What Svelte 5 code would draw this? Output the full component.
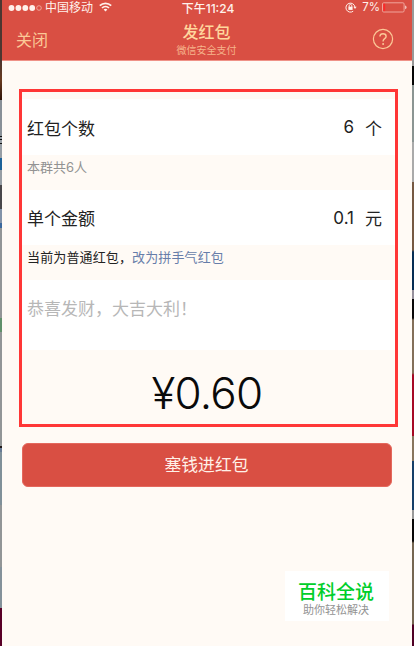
<script>
  const count = 6;
  const amount = '0.1';
  const total = '0.60';
</script>

<div class="desktop">
  <div class="edge left"></div>
  <main class="phone">
    <header>
      <div class="status">
        <div class="carrier">
          <svg width="35" height="8" viewBox="0 0 35 8">
            <g fill="#fff1eb">
              <circle cx="3.5" cy="4" r="2.9" /><circle cx="10.4" cy="4" r="2.9" />
              <circle cx="17.3" cy="4" r="2.9" /><circle cx="24.2" cy="4" r="2.9" />
            </g>
            <circle cx="31" cy="4" r="2.3" fill="none" stroke="#f3aaa0" stroke-width="0.9" />
          </svg>
          <span>中国移动</span>
          <svg class="wifi" width="13" height="10" viewBox="0 0 13 10" fill="none" stroke="#fff1eb" stroke-width="1.7">
            <path d="M.8 3.6a8.2 8.2 0 0 1 11.4 0M3 6a5 5 0 0 1 7 0" />
            <path d="M4.6 7.6a2.8 2.8 0 0 1 3.8 0L6.5 9.6z" fill="#fff1eb" stroke="none" />
          </svg>
        </div>
        <span class="time">下午11:24</span>
        <div class="power">
          <svg width="12" height="11" viewBox="0 0 12 11" fill="none" stroke="#fff1eb">
            <path d="M8.2 9.2A4.5 4.5 0 1 1 9.9 5" stroke-width="1" />
            <path d="M8.4 4.7h3.2L10 7z" fill="#fff1eb" stroke="none" />
            <path d="M4.2 5V3.8a1.3 1.3 0 0 1 2.6 0V5" stroke-width=".9" />
            <rect x="3.4" y="4.7" width="4.2" height="3.2" fill="#fff1eb" stroke="none" />
          </svg>
          <span>7%</span>
          <svg width="25" height="11" viewBox="0 0 25 11">
            <rect x=".5" y=".8" width="21.6" height="9.2" rx="1.2" fill="none" stroke="#f0a49b" />
            <rect x="1.4" y="1.7" width="1.7" height="7.4" fill="#ff2929" />
            <path d="M23.3 3.6c1.5.3 1.5 3.3 0 3.6z" fill="#fff1eb" />
          </svg>
        </div>
      </div>
      <nav>
        <span class="close">关闭</span>
        <div class="title"><h1>发红包</h1><p>微信安全支付</p></div>
        <svg class="help" width="22" height="22" viewBox="0 0 22 22" fill="none" stroke="#fbc897">
          <circle cx="11" cy="11" r="9.6" stroke-width="1.2" />
          <path d="M7.9 8.5C8 6.8 9.2 5.8 11 5.8s3.1 1 3.1 2.6c0 2.2-3 2.3-3 4.7v.5" stroke-width="1.4" />
          <circle cx="11.1" cy="15.9" r="1" fill="#fbc897" stroke="none" />
        </svg>
      </nav>
    </header>

    <section class="frame">
      <div class="row"><span>红包个数</span><span class="value">{count}</span><span class="unit">个</span></div>
      <p class="note members">本群共6人</p>
      <div class="row second"><span>单个金额</span><span class="value">{amount}</span><span class="unit">元</span></div>
      <p class="note mode">当前为普通红包，<span class="link">改为拼手气红包</span></p>
      <div class="message">恭喜发财，大吉大利！</div>
      <div class="total"><span class="yen">¥</span><span>{total}</span></div>
    </section>

    <button>塞钱进红包</button>
    <aside><strong>百科全说</strong><span>助你轻松解决</span></aside>
  </main>
  <div class="edge right"></div>
</div>

<style>
  .desktop {
    display: flex;
    width: 414px;
    height: 646px;
    overflow: hidden;
    font-family: Inter, "Noto Sans CJK SC", sans-serif;
    color: #222;
  }
  .edge { width: 2px; flex: none; }
  .left {
    background: linear-gradient(#4b3630 0 60px, #693a20 80px, #30150a 100px, #899097 100px 136px,
      #111 136px 137px, #969da4 137px 139px, #111 139px 140px, #969da4 140px 143px, #111 143px 144px,
      #969da4 144px 158px, #1d6299 158px 170px, #969da4 170px 185px,
      #49474a 185px 209px, #8292a8 209px 223px, #3b689d 223px 228px, #929596 228px 318px,
      #60906a 318px 332px, #929596 332px 446px, #211a1a 446px 448px, #687b94 448px 452px,
      #809099 452px 505px, #929596 505px 567px, #84919a 567px 608px, #590027 608px);
  }
  .right {
    background: linear-gradient(#999 0 66px, #050505 66px 85px, #8b9593 85px 142px,
      #aaa 142px 182px, #765943 182px 250px, #052d54 252px 290px, #96909c 290px 299px,
      #090808 299px 318px, #836f59 320px 373px, #a60925 375px 436px, #88765f 436px 461px,
      #153f69 461px 510px, #999 510px 519px, #080707 519px 541px, #756651 543px 624px, #500025 625px);
  }
  .phone { flex: none; width: 410px; background: #fffaf5; }
  header {
    box-sizing: border-box;
    height: 61px;
    background: #d94f43;
    border-bottom: 1px solid #ef9288;
  }
  .status {
    display: grid;
    grid-template-columns: 1fr auto 1fr;
    grid-template-rows: 15px;
    align-items: center;
    height: 15px;
    padding: 0 6px;
    color: #fff1eb;
    font-size: 12px;
    line-height: 15px;
  }
  .carrier, .power { display: flex; align-items: center; }
  .carrier span { margin-left: 2px; }
  .wifi { margin-left: 6px; margin-top: -2px; }
  .time { font-weight: 500; font-size: 12px; margin: 1px 0 0 2px; }
  .power { justify-content: flex-end; margin-right: -6px; padding-right: 5px; }
  .power span { margin: 0 2px 0 5px; font-size: 11.5px; }
  nav {
    display: grid;
    grid-template-columns: 1fr auto 1fr;
    height: 45px;
    padding: 0 18px 0 14px;
    color: #fbc897;
  }
  .close { font-size: 16px; line-height: 18px; margin-top: 16px; }
  .title { text-align: center; padding-left: 3px; }
  h1 { margin: 8px 0 0; font-size: 16px; line-height: 18px; font-weight: 500; color: #ffd69d; }
  .title p { margin: 2px 0 0; font-size: 10px; line-height: 14px; color: #f6b48c; }
  .help { justify-self: end; margin-top: 13px; }
  .frame {
    box-sizing: border-box;
    width: 379px;
    height: 338px;
    margin: 28px 0 0 17px;
    border: 3px solid #ff3636;
    padding-top: 7px;
  }
  .row {
    display: flex;
    align-items: center;
    height: 56px;
    padding: 0 13px 0 5px;
    background: #fff;
    font-size: 17px;
  }
  .second { height: 55px; }
  .value { margin-left: auto; }
  .unit { margin-left: 11px; }
  .note { margin: 0; padding-left: 5px; font-size: 13px; }
  .members { height: 35px; line-height: 24px; color: #929292; }
  .mode { height: 35px; line-height: 24px; letter-spacing: .13px; }
  .link { color: #677da9; }
  .message {
    box-sizing: border-box;
    height: 70px;
    padding: 17px 5px 15px;
    background: #fff;
    color: #b7b7b7;
    font-size: 17px;
    line-height: 24px;
  }
  .total {
    display: flex;
    justify-content: center;
    align-items: center;
    height: 86px;
    color: #0a0a0a;
    font-size: 44px;
    font-weight: 300;
    line-height: 54px;
    letter-spacing: -.8px;
    padding-right: 3px;
  }
  .yen { margin-right: 0; }
  button {
    display: block;
    width: 370px;
    height: 44px;
    margin: 16px 0 0 20px;
    padding: 1px 1px 0 0;
    border: 1px solid #e4685d;
    border-radius: 6px;
    background: #d94f43;
    color: #fff1e8;
    font: 16.8px/41px Inter, "Noto Sans CJK SC", sans-serif;
  }
  aside {
    box-sizing: border-box;
    width: 104px;
    height: 50px;
    margin: 84px 0 0 283px;
    padding: 11px 2px 0 0;
    background: #fff;
    text-align: center;
  }
  strong { display: block; font-size: 19px; line-height: 21px; font-weight: 500; color: #00ce2b; }
  aside span { display: block; font-size: 11px; line-height: 15px; color: #929292; }
</style>
